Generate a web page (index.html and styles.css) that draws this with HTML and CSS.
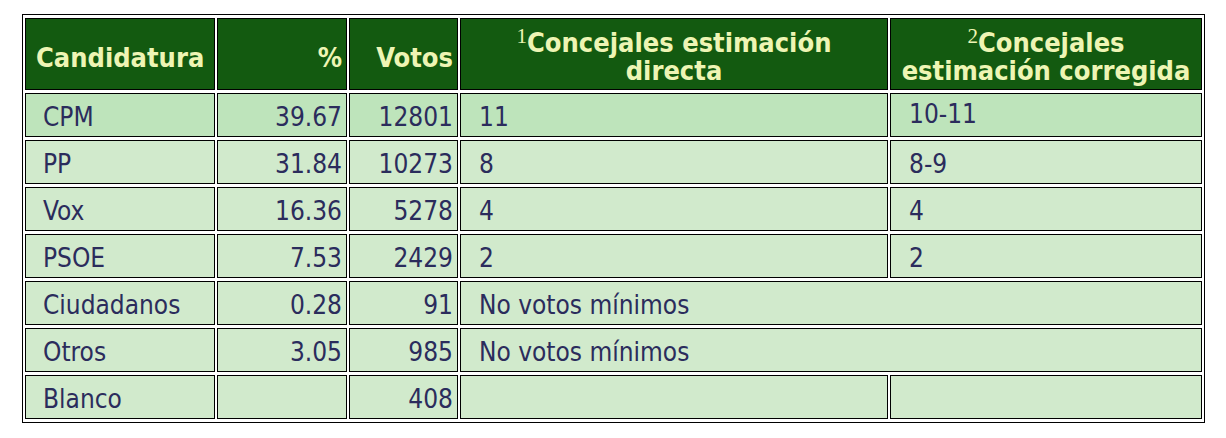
FILE: index.html
```html
<!DOCTYPE html>
<html lang="es">
<head>
<meta charset="utf-8">
<title>Estimación</title>
<link rel="stylesheet" href="styles.css">
</head>
<body>
<table class="results">
  <colgroup>
    <col class="c-cand">
    <col class="c-pct">
    <col class="c-votes">
    <col class="c-dir">
    <col class="c-cor">
  </colgroup>
  <thead>
    <tr>
      <th class="left">Candidatura</th>
      <th class="right">%</th>
      <th class="right">Votos</th>
      <th class="center"><sup>1</sup>Concejales estimación<br>directa</th>
      <th class="center"><sup>2</sup>Concejales<br>estimación corregida</th>
    </tr>
  </thead>
  <tbody>
    <tr class="first">
      <td class="name">CPM</td><td class="num">39.67</td><td class="num">12801</td><td class="txt">11</td><td class="txt raised">10-11</td>
    </tr>
    <tr>
      <td class="name">PP</td><td class="num">31.84</td><td class="num">10273</td><td class="txt">8</td><td class="txt">8-9</td>
    </tr>
    <tr>
      <td class="name">Vox</td><td class="num">16.36</td><td class="num">5278</td><td class="txt">4</td><td class="txt">4</td>
    </tr>
    <tr>
      <td class="name">PSOE</td><td class="num">7.53</td><td class="num">2429</td><td class="txt">2</td><td class="txt">2</td>
    </tr>
    <tr>
      <td class="name">Ciudadanos</td><td class="num">0.28</td><td class="num">91</td><td class="txt" colspan="2">No votos mínimos</td>
    </tr>
    <tr>
      <td class="name">Otros</td><td class="num">3.05</td><td class="num">985</td><td class="txt" colspan="2">No votos mínimos</td>
    </tr>
    <tr>
      <td class="name">Blanco</td><td class="num"></td><td class="num">408</td><td class="txt"></td><td class="txt"></td>
    </tr>
  </tbody>
</table>
</body>
</html>
```
FILE: styles.css
```css
html, body {
  margin: 0;
  padding: 0;
  background: #ffffff;
}

body {
  padding: 14px 0 0 22px;
}

.results {
  table-layout: fixed;
  width: 1183px;
  border: 1px solid #000;
  border-collapse: separate;
  border-spacing: 2px 3px;
  font-family: "DejaVu Sans Condensed", "DejaVu Sans", sans-serif;
  font-stretch: semi-condensed;
  font-size: 26px;
}

.c-cand { width: 190px; }
.c-pct { width: 130px; }
.c-votes { width: 109px; }
.c-dir { width: 428px; }
.c-cor { width: 312px; }

.results th,
.results td {
  box-sizing: border-box;
  border: 1px solid #000;
  vertical-align: middle;
}

.results th {
  height: 72px;
  background: #135a10;
  color: #eef5b4;
  font-size: 27px;
  font-weight: bold;
  line-height: 28px;
  padding: 4px 4px 0 10px;
}

.results th.left { text-align: left; padding-top: 8px; }
.results th.right { text-align: right; padding-left: 4px; padding-top: 8px; }
.results th.center { text-align: center; padding: 5px 2px 0 2px; }

.results sup {
  font-family: "Liberation Serif", serif;
  font-weight: normal;
  font-size: 21px;
  line-height: 0;
  vertical-align: 9px;
}

.results td {
  height: 44px;
  background: #d1eacc;
  color: #2b2c5c;
  line-height: 30px;
  padding: 4px 4px 0 4px;
}

.results tr.first td {
  background: #bee4bb;
}

.results td.name { padding-left: 17px; }
.results td.txt { padding-left: 18px; }
.results td.num { text-align: right; }
.results td.raised { padding-top: 0; padding-bottom: 2px; }
```
